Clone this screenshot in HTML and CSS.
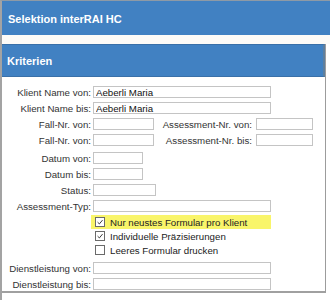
FILE: index.html
```html
<!DOCTYPE html>
<html lang="de">
<head>
    <meta charset="UTF-8">
    <meta name="viewport" content="width=device-width, initial-scale=1.0">
    <title>Selektion interRAI HC</title>
    <link rel="stylesheet" href="styles.css">
</head>
<body>
    <div class="window">
        <div class="title-bar">Selektion interRAI HC</div>
        <div class="spacer"></div>

        <div class="panel">
            <div class="panel-head">Kriterien</div>
            <div class="panel-body">
                <div class="row">
                    <span class="lbl">Klient Name von:</span>
                    <input class="field wide" type="text" value="Aeberli Maria">
                </div>
                <div class="row">
                    <span class="lbl">Klient Name bis:</span>
                    <input class="field wide" type="text" value="Aeberli Maria">
                </div>
                <div class="row">
                    <span class="lbl">Fall-Nr. von:</span>
                    <input class="field short" type="text">
                    <span class="lbl2">Assessment-Nr. von:</span>
                    <input class="field nr" type="text">
                </div>
                <div class="row">
                    <span class="lbl">Fall-Nr. von:</span>
                    <input class="field short" type="text">
                    <span class="lbl2">Assessment-Nr. bis:</span>
                    <input class="field nr" type="text">
                </div>

                <div class="row first-date">
                    <span class="lbl">Datum von:</span>
                    <input class="field date" type="text">
                </div>
                <div class="row">
                    <span class="lbl">Datum bis:</span>
                    <input class="field date" type="text">
                </div>
                <div class="row">
                    <span class="lbl">Status:</span>
                    <input class="field short status" type="text">
                </div>
                <div class="row">
                    <span class="lbl">Assessment-Typ:</span>
                    <input class="field wide" type="text">
                </div>

                <!-- Optionen -->
                <div class="check-row highlight">
                    <span class="box checked"><svg viewBox="0 0 10 10"><path d="M2 5.2 L4.2 7.4 L8.2 2.6" fill="none" stroke="#333" stroke-width="1.2"/></svg></span>
                    Nur neustes Formular pro Klient
                </div>
                <div class="check-row">
                    <span class="box checked"><svg viewBox="0 0 10 10"><path d="M2 5.2 L4.2 7.4 L8.2 2.6" fill="none" stroke="#333" stroke-width="1.2"/></svg></span>
                    Individuelle Präzisierungen
                </div>
                <div class="check-row">
                    <span class="box"></span>
                    Leeres Formular drucken
                </div>

                <div class="row service">
                    <span class="lbl">Dienstleistung von:</span>
                    <input class="field wide" type="text">
                </div>
                <div class="row">
                    <span class="lbl">Dienstleistung bis:</span>
                    <input class="field wide" type="text">
                </div>
            </div>
        </div>
    </div>
</body>
</html>
```

FILE: styles.css
```css
body {
    margin: 0;
    font-family: "Liberation Sans", Arial, sans-serif;
    font-size: 9.7px;
    color: #222;
    background: #fff;
}
.window {
    border-left: 2px solid #a3a3a3;
    border-top: 1px solid #8e9aa6;
    height: 299px;
}
.title-bar {
    background-color: #4181c2;
    color: #fff;
    font-weight: bold;
    font-size: 11px;
    height: 34px;
    line-height: 36px;
    padding-left: 6px;
}
.spacer {
    height: 9px;
    background: #fdfbf7;
}
.panel {
    margin-right: 4px;
    border-right: 1px solid #9c9c9c;
    border-bottom: 2px solid #a0a0a0;
}
.panel-head {
    background-color: #4181c2;
    color: #fff;
    font-weight: bold;
    font-size: 11px;
    height: 31px;
    line-height: 33px;
    padding-left: 5px;
    border-top: 1px solid #3a70a8;
    border-bottom: 1px solid #3a70a8;
    border-right: 2px solid #5d7f9f;
}
.panel-body {
    padding-top: 7px;
    height: 207px;
}
.row {
    display: flex;
    align-items: center;
    height: 16px;
}
.first-date {
    margin-top: 2px;
}
.service {
    margin-top: 3px;
}
.lbl {
    width: 89px;
    text-align: right;
    margin-right: 2px;
    color: #333;
}
.lbl2 {
    width: 98px;
    text-align: right;
    margin-right: 4px;
    color: #333;
}
.field {
    box-sizing: border-box;
    height: 12px;
    border: 1px solid #c4c4c4;
    background: #fff;
    padding: 0 2px;
    margin: 0;
    font-family: inherit;
    font-size: 9.7px;
    color: #111;
    outline: none;
}
.wide {
    width: 178px;
}
.short {
    width: 61px;
}
.status {
    width: 63px;
}
.date {
    width: 50px;
}
.nr {
    width: 57px;
}
.check-row {
    display: flex;
    align-items: center;
    height: 14px;
    margin-left: 89px;
    width: 180px;
    padding-left: 4px;
    box-sizing: border-box;
    color: #222;
}
.highlight {
    background-color: #f9f56a;
    margin-top: 1px;
}
.box {
    box-sizing: border-box;
    width: 10px;
    height: 10px;
    border: 1px solid #6a6a6a;
    background: #fff;
    margin-right: 5px;
    display: flex;
}
.box svg {
    width: 8px;
    height: 8px;
}
```
